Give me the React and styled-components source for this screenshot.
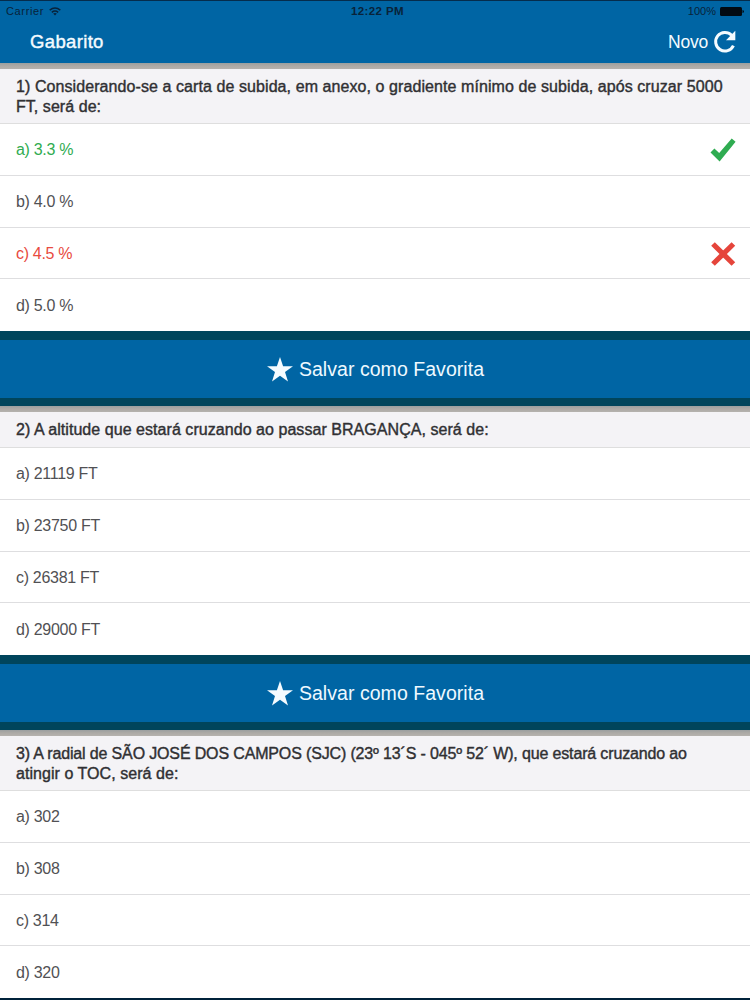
import React from 'react';
import styled, { createGlobalStyle } from 'styled-components';

const GlobalStyle = createGlobalStyle`
  * { box-sizing: border-box; }
  body {
    margin: 0; background: #fff; overflow: hidden;
    font-family: "Liberation Sans", Arial, sans-serif;
  }
`;

const Screen = styled.main`
  width: 750px; height: 1000px; overflow: hidden;
  background: #00223a;
`;

const Header = styled.header`
  height: 63px; background: #0065a4;
  border-top: 1px solid #052c4c;
`;

const StatusBar = styled.div`
  display: grid; grid-template-columns: 1fr auto 1fr; align-items: center;
  height: 20px; padding: 0 6px;
  font-size: 11px; color: #08233a;
`;

const StatusSide = styled.div`
  display: flex; align-items: center;
  gap: ${({ $end }) => ($end ? '4px' : '5px')};
  justify-content: ${({ $end }) => ($end ? 'flex-end' : 'flex-start')};
  letter-spacing: ${({ $end }) => ($end ? '0' : '0.65px')};
`;

const Clock = styled.span`
  font-weight: bold; font-size: 11.5px; letter-spacing: 0.4px; padding-left: 5px;
`;

const NavBar = styled.div`
  display: flex; align-items: center; justify-content: space-between;
  height: 42px; padding: 0 13px 0 30px; color: #f4fbff;
`;

const Title = styled.h1`
  margin: 0; font-size: 18.5px; font-weight: normal; letter-spacing: 0.35px;
  -webkit-text-stroke: 0.4px currentColor;
`;

const NewButton = styled.button`
  display: flex; align-items: center; gap: 5px;
  padding: 0; border: none; background: none; color: inherit;
  font-family: inherit; font-size: 17.5px; letter-spacing: -0.2px;
`;

const Divider = styled.div`
  height: 6px; background: linear-gradient(#9b9f9f, #adaaa6 50%, #b5b2ae);
`;

const Statement = styled.h2`
  margin: 0; height: ${({ $tall }) => ($tall ? '55px' : '36px')};
  padding: 8px 16px 0; border-bottom: 1px solid #dedede;
  background: #f4f3f6; color: #303033;
  font-size: 16px; font-weight: normal; line-height: 19.5px;
  -webkit-text-stroke: 0.4px currentColor;
`;

const Line = styled.span`
  display: block; white-space: nowrap;
  letter-spacing: ${({ $spacing }) => $spacing || '0.05px'};
`;

const colors = { right: '#2fac51', wrong: '#e84a40' };

const Option = styled.li`
  display: flex; align-items: center; justify-content: space-between;
  height: 51.75px; padding: 2px 14px 0 16px;
  border-bottom: 1px solid #dedee0; background: #fff;
  color: ${({ $state }) => colors[$state] || '#515154'};
  font-size: 16px; letter-spacing: -0.3px;
  &:last-child { border-bottom: none; }
`;

const Options = styled.ul`
  margin: 0; padding: 0; list-style: none;
`;

const SaveButton = styled.button`
  display: flex; align-items: center; justify-content: center; gap: 6px;
  width: 100%; height: 75px; padding: 1px 0 0 1px;
  border: solid #00455c; border-width: 9px 0 8px;
  background: #0065a4; color: #eef9ff;
  font-family: inherit; font-size: 19.5px; letter-spacing: 0.05px;
`;

const Wifi = () => (
  <svg width="12" height="9" viewBox="0 0 12 9" fill="none" stroke="#08233a" strokeWidth="1.5">
    <path d="M.7 3.2Q6-1.2 11.3 3.2M2.8 5.3Q6 2.7 9.2 5.3" />
    <path d="M4.2 6.6Q6 5.2 7.8 6.6L6 8.5Z" fill="#08233a" stroke="none" />
  </svg>
);

const Battery = () => (
  <svg width="24" height="9" viewBox="0 0 24 9" fill="#020a12">
    <rect width="22" height="9" rx="1.5" />
    <path d="M22.5 3Q24 3.2 24 4.5T22.5 6Z" />
  </svg>
);

const Refresh = () => (
  <svg width="24" height="24" viewBox="0 0 24 24" fill="none">
    <path d="M18.6 5.2A9.3 9.3 0 1 0 20.4 15.6" stroke="#f4fbff" strokeWidth="3" />
    <path d="M22.3.8V10.2H13Z" fill="#f4fbff" />
  </svg>
);

const Check = () => (
  <svg width="26" height="24" viewBox="0 0 26 24">
    <path d="M.5 14.4L4.4 10.4L9.2 14.9L21.7.4L25.6 3.8L9.6 23.6Z" fill="#2fac51" />
  </svg>
);

const Cross = () => (
  <svg width="25" height="24" viewBox="0 0 25 24" stroke="#e5453b" strokeWidth="5.2">
    <path d="M2 2L22.4 22M22.4 2L2 22" />
  </svg>
);

const Star = () => (
  <svg width="26" height="25" viewBox="0 0 26 25" fill="#f4fbff">
    <path d="M13 0L16.1 9.2H26L18 15L21 24.5L13 18.7L5 24.5L8 15L0 9.2H9.9Z" />
  </svg>
);

const questions = [
  {
    lines: [
      ['1) Considerando-se a carta de subida, em anexo, o gradiente mínimo de subida, após cruzar 5000', '0.08px'],
      ['FT, será de:'],
    ],
    options: [
      { text: 'a) 3.3 %', state: 'right' },
      { text: 'b) 4.0 %' },
      { text: 'c) 4.5 %', state: 'wrong' },
      { text: 'd) 5.0 %' },
    ],
  },
  {
    lines: [['2) A altitude que estará cruzando ao passar BRAGANÇA, será de:']],
    options: [{ text: 'a) 21119 FT' }, { text: 'b) 23750 FT' }, { text: 'c) 26381 FT' }, { text: 'd) 29000 FT' }],
  },
  {
    lines: [
      ['3) A radial de SÃO JOSÉ DOS CAMPOS (SJC) (23º 13´S - 045º 52´ W), que estará cruzando ao', '-0.15px'],
      ['atingir o TOC, será de:'],
    ],
    options: [{ text: 'a) 302' }, { text: 'b) 308' }, { text: 'c) 314' }, { text: 'd) 320' }],
  },
];

const Question = ({ lines, options }) => (
  <section>
    <Divider />
    <Statement $tall={lines.length > 1}>
      {lines.map(([text, spacing]) => (
        <Line key={text} $spacing={spacing}>{text}</Line>
      ))}
    </Statement>
    <Options>
      {options.map(({ text, state }) => (
        <Option key={text} $state={state}>
          {text}
          {state === 'right' && <Check />}
          {state === 'wrong' && <Cross />}
        </Option>
      ))}
    </Options>
  </section>
);

const App = () => {
  return (
    <Screen>
      <GlobalStyle />
      <Header>
        <StatusBar>
          <StatusSide>Carrier <Wifi /></StatusSide>
          <Clock>12:22 PM</Clock>
          <StatusSide $end>100% <Battery /></StatusSide>
        </StatusBar>
        <NavBar>
          <Title>Gabarito</Title>
          <NewButton>Novo <Refresh /></NewButton>
        </NavBar>
      </Header>
      {questions.map((question, i) => (
        <React.Fragment key={i}>
          <Question {...question} />
          {i < questions.length - 1 && <SaveButton><Star />Salvar como Favorita</SaveButton>}
        </React.Fragment>
      ))}
    </Screen>
  );
};

export default App;
